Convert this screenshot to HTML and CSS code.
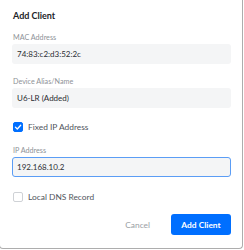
FILE: index.html
```html
<!DOCTYPE html>
<html lang="en">
<head>
    <meta charset="UTF-8">
    <meta name="viewport" content="width=device-width, initial-scale=1.0">
    <title>Add Client</title>
    <link rel="stylesheet" href="styles.css">
</head>
<body>
    <div class="dialog">
        <h1 class="dialog-title">Add Client</h1>

        <div class="field">
            <label class="field-label">MAC Address</label>
            <div class="field-input">74:83:c2:d3:52:2c</div>
        </div>

        <div class="field field-next">
            <label class="field-label">Device Alias/Name</label>
            <div class="field-input">U6-LR (Added)</div>
        </div>

        <div class="check-row check-first">
            <span class="check checked">
                <svg viewBox="0 0 10 10" width="10" height="10">
                    <path d="M2.4 5.1 L4.3 7 L7.7 3.2" fill="none" stroke="#fff" stroke-width="1.3" stroke-linecap="round" stroke-linejoin="round"/>
                </svg>
            </span>
            <span class="check-label">Fixed IP Address</span>
        </div>

        <div class="field field-ip">
            <label class="field-label">IP Address</label>
            <div class="field-input focused">192.168.10.2</div>
        </div>

        <div class="check-row check-second">
            <span class="check"></span>
            <span class="check-label">Local DNS Record</span>
        </div>

        <div class="actions">
            <button class="btn-cancel">Cancel</button>
            <button class="btn-primary">Add Client</button>
        </div>
    </div>
</body>
</html>
```

FILE: styles.css
```css
* {
    margin: 0;
    padding: 0;
    box-sizing: border-box;
}
body {
    background: #fff;
    font-family: Lato, "Liberation Sans", sans-serif;
    overflow: hidden;
}

.dialog {
    width: 244px;
    height: 249px;
    margin-left: -1px;
    border: 1px solid #adadad;
    border-top: none;
    border-radius: 0 0 4px 4px;
    background: #fff;
    padding: 10px 11px 0 12px;
    display: flex;
    flex-direction: column;
}

.dialog-title {
    font-size: 9px;
    font-weight: bold;
    line-height: 12px;
    color: #212327;
    padding-left: 1px;
}

.field {
    display: flex;
    flex-direction: column;
    gap: 1px;
    margin-top: 10px;
}
.field-next {
    margin-top: 12px;
}
.field-ip {
    margin-top: 11px;
}

.field-label {
    font-size: 7.2px;
    line-height: 11px;
    color: #8e9297;
    padding-left: 1px;
}

.field-input {
    height: 20px;
    background: #f4f5f6;
    border: 1px solid transparent;
    border-radius: 3px;
    font-size: 8px;
    line-height: 18px;
    color: #2b2e33;
    padding-left: 4px;
}
.field-input.focused {
    border-color: #5b9df5;
}

.check-row {
    display: flex;
    align-items: center;
    gap: 5px;
    height: 14px;
    padding-left: 1px;
}
.check-first {
    margin-top: 12px;
}
.check-second {
    margin-top: 13px;
}

.check {
    width: 10px;
    height: 10px;
    border: 1px solid #cfd2d6;
    border-radius: 2px;
    background: #fff;
    display: flex;
}
.check.checked {
    border-color: #006fff;
    background: #006fff;
}
.check svg {
    margin: -1px;
}

.check-label {
    font-size: 8.4px;
    color: #50555c;
}

.actions {
    display: flex;
    justify-content: flex-end;
    align-items: center;
    gap: 21px;
    margin-top: 10px;
}

.btn-cancel {
    background: none;
    border: none;
    font-family: inherit;
    font-size: 8.4px;
    color: #9a9ea4;
}

.btn-primary {
    width: 60px;
    height: 21px;
    background: #006fff;
    border: none;
    border-radius: 3px;
    font-family: inherit;
    font-size: 8.4px;
    font-weight: bold;
    color: #fff;
}
```
